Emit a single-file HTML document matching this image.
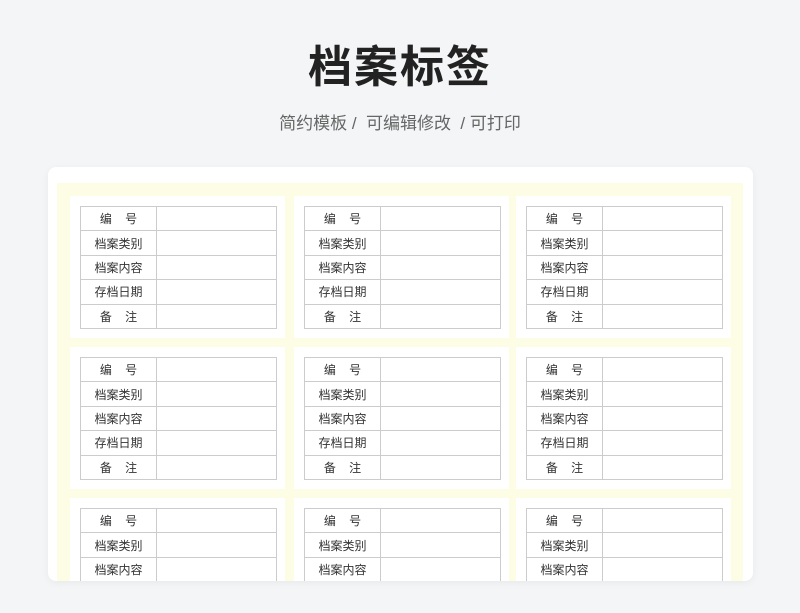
<!DOCTYPE html>
<html><head><meta charset="utf-8"><style>
body{margin:0;width:800px;height:613px;background:#f3f5f7;font-family:"Liberation Sans","Noto Sans CJK SC",sans-serif;position:relative;overflow:hidden}
h1{position:absolute;top:38px;left:0;width:800px;text-align:center;margin:0;font-size:44px;line-height:60px;font-weight:bold;color:#222;letter-spacing:2px}
.sub{position:absolute;top:112px;left:0;width:800px;text-align:center;font-size:17px;color:#666;line-height:24px}
.card{position:absolute;left:48px;top:167px;width:705px;height:414px;background:#fff;border-radius:8px;overflow:hidden;box-shadow:0 2px 8px rgba(0,0,0,.05)}
.yel{position:absolute;left:9px;top:16px;width:686px;height:420px;background:#fdfde6}
.p{position:absolute;width:215px;height:142px;background:#fff}
table{position:absolute;left:10px;top:10px;width:197px;border-collapse:collapse}
td{border:1px solid #ccc;height:23.4px;padding:0;font-size:12px;color:#333;text-align:center}
td.l{width:75px}
</style></head><body>
<h1>档案标签</h1>
<div class="sub">简约模板 /&nbsp; 可编辑修改 &nbsp;/ 可打印</div>
<div class="card"><div class="yel"></div>
<div class="p" style="left:22px;top:29px"><table><tr><td class="l">编&nbsp;&nbsp;&nbsp;&nbsp;号</td><td></td></tr><tr><td class="l">档案类别</td><td></td></tr><tr><td class="l">档案内容</td><td></td></tr><tr><td class="l">存档日期</td><td></td></tr><tr><td class="l">备&nbsp;&nbsp;&nbsp;&nbsp;注</td><td></td></tr></table></div>
<div class="p" style="left:246px;top:29px"><table><tr><td class="l">编&nbsp;&nbsp;&nbsp;&nbsp;号</td><td></td></tr><tr><td class="l">档案类别</td><td></td></tr><tr><td class="l">档案内容</td><td></td></tr><tr><td class="l">存档日期</td><td></td></tr><tr><td class="l">备&nbsp;&nbsp;&nbsp;&nbsp;注</td><td></td></tr></table></div>
<div class="p" style="left:468px;top:29px"><table><tr><td class="l">编&nbsp;&nbsp;&nbsp;&nbsp;号</td><td></td></tr><tr><td class="l">档案类别</td><td></td></tr><tr><td class="l">档案内容</td><td></td></tr><tr><td class="l">存档日期</td><td></td></tr><tr><td class="l">备&nbsp;&nbsp;&nbsp;&nbsp;注</td><td></td></tr></table></div>
<div class="p" style="left:22px;top:180px"><table><tr><td class="l">编&nbsp;&nbsp;&nbsp;&nbsp;号</td><td></td></tr><tr><td class="l">档案类别</td><td></td></tr><tr><td class="l">档案内容</td><td></td></tr><tr><td class="l">存档日期</td><td></td></tr><tr><td class="l">备&nbsp;&nbsp;&nbsp;&nbsp;注</td><td></td></tr></table></div>
<div class="p" style="left:246px;top:180px"><table><tr><td class="l">编&nbsp;&nbsp;&nbsp;&nbsp;号</td><td></td></tr><tr><td class="l">档案类别</td><td></td></tr><tr><td class="l">档案内容</td><td></td></tr><tr><td class="l">存档日期</td><td></td></tr><tr><td class="l">备&nbsp;&nbsp;&nbsp;&nbsp;注</td><td></td></tr></table></div>
<div class="p" style="left:468px;top:180px"><table><tr><td class="l">编&nbsp;&nbsp;&nbsp;&nbsp;号</td><td></td></tr><tr><td class="l">档案类别</td><td></td></tr><tr><td class="l">档案内容</td><td></td></tr><tr><td class="l">存档日期</td><td></td></tr><tr><td class="l">备&nbsp;&nbsp;&nbsp;&nbsp;注</td><td></td></tr></table></div>
<div class="p" style="left:22px;top:331px"><table><tr><td class="l">编&nbsp;&nbsp;&nbsp;&nbsp;号</td><td></td></tr><tr><td class="l">档案类别</td><td></td></tr><tr><td class="l">档案内容</td><td></td></tr><tr><td class="l">存档日期</td><td></td></tr><tr><td class="l">备&nbsp;&nbsp;&nbsp;&nbsp;注</td><td></td></tr></table></div>
<div class="p" style="left:246px;top:331px"><table><tr><td class="l">编&nbsp;&nbsp;&nbsp;&nbsp;号</td><td></td></tr><tr><td class="l">档案类别</td><td></td></tr><tr><td class="l">档案内容</td><td></td></tr><tr><td class="l">存档日期</td><td></td></tr><tr><td class="l">备&nbsp;&nbsp;&nbsp;&nbsp;注</td><td></td></tr></table></div>
<div class="p" style="left:468px;top:331px"><table><tr><td class="l">编&nbsp;&nbsp;&nbsp;&nbsp;号</td><td></td></tr><tr><td class="l">档案类别</td><td></td></tr><tr><td class="l">档案内容</td><td></td></tr><tr><td class="l">存档日期</td><td></td></tr><tr><td class="l">备&nbsp;&nbsp;&nbsp;&nbsp;注</td><td></td></tr></table></div>
</div>
</body></html>
